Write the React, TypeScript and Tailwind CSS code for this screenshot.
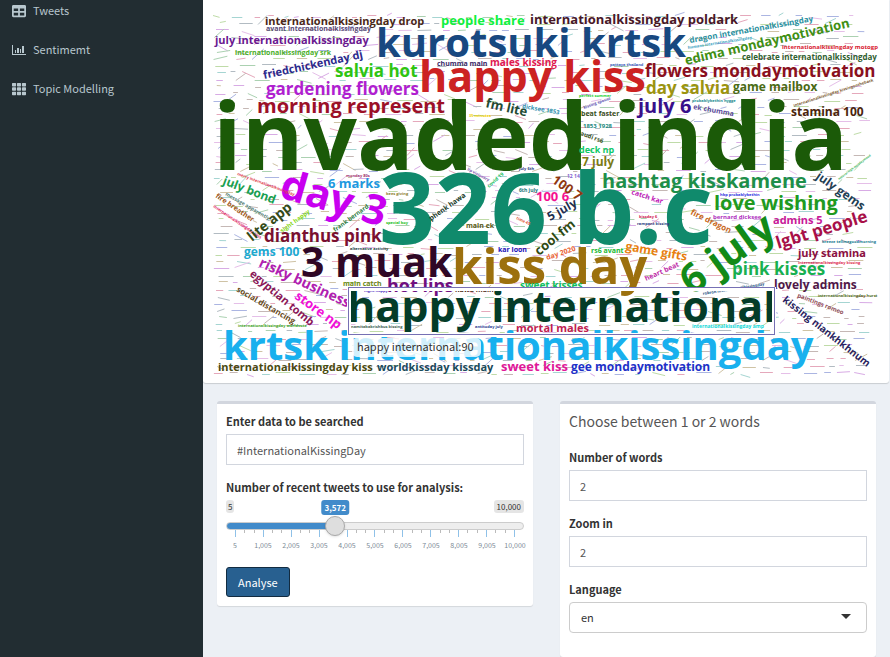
import { useState, type ReactNode } from "react";
import { FaTable, FaTh } from "react-icons/fa";

type Word = [text: string, x: number, y: number, size: number, color: string, angle?: number];

const words: Word[] = [
  ["invaded india", 213, 170, 94, "#1b5a08"],
  ["326 b.c", 379, 244, 98, "#108a6c"],
  ["kiss day", 452, 284, 49, "#9c700e"],
  ["3 muak", 301, 277, 41, "#300826"],
  ["happy kiss", 419, 92, 43, "#cc2222"],
  ["kurotsuki krtsk", 376, 57, 40, "#184880"],
  ["krtsk internationalkissingday", 223, 360, 40, "#18b0ee"],
  ["happy international", 347, 322, 43, "#043c28"],
  ["day 3", 278, 197, 41, "#c800f0", 16],
  ["6 july", 692, 296, 40, "#128a18", -36],
  ["internationalkissingday drop", 265, 25, 11, "#4a2818"],
  ["avant internationalkissingday", 266, 31, 7, "#5a4a78"],
  ["july internationalkissingday", 215, 44, 11, "#6a1890"],
  ["internationalkissingday srk", 235, 55, 7, "#4caf28"],
  ["friedchickenday dj", 264, 79, 11, "#2b2a8c", -12],
  ["salvia hot", 335, 77, 17, "#2fc412"],
  ["gardening flowers", 266, 95, 17, "#b01fd0"],
  ["morning represent", 257, 113, 20, "#9c1028"],
  ["people share", 441, 25, 13, "#10f040"],
  ["internationalkissingday poldark", 530, 24, 13, "#481828"],
  ["chumma main", 437, 66, 7, "#3a2a68"],
  ["males kissing", 490, 66, 10, "#e01850"],
  ["flowers mondaymotivation", 645, 77, 17, "#8a1020"],
  ["dragon internationalkissingday", 690, 43, 8, "#2a8fa0", -10],
  ["humans internationalkissingday", 688, 49, 4, "#3a9fc0", -9],
  ["edima mondaymotivation", 686, 65, 13, "#3f8f14", -13],
  ["internationalkissingday motogp", 782, 49, 6, "#d82030"],
  ["celebrate internationalkissingday", 742, 60, 8, "#2f6030"],
  ["day salvia", 646, 94, 17, "#9c9410"],
  ["game mailbox", 733, 91, 12, "#4a6a14"],
  ["july 6", 638, 113, 20, "#380f8a"],
  ["ek chumma", 693, 109, 7, "#5a4a9a", 10],
  ["stamina 100", 791, 116, 12, "#4a240c"],
  ["internationalkissingday kissingontheback", 794, 107, 4, "#7a5a30", -18],
  ["probablybethin hygge", 692, 102, 4, "#208a90"],
  ["fm lite", 485, 107, 13, "#244a34", 13],
  ["dicksee 1853", 522, 108, 6, "#2f90b0", 10],
  ["beat faster", 581, 116, 7, "#3a5020"],
  ["1853 1928", 583, 128, 6, "#1a8a80"],
  ["audi rs6", 580, 135, 6, "#3a5020", 20],
  ["kissing spouse", 584, 109, 4, "#5a50b0", -20],
  ["perfect summer", 579, 97, 4, "#20d030"],
  ["pattaya thailand", 610, 66, 4, "#3a60b8"],
  ["35 minutes", 469, 117, 4, "#f0d000"],
  ["deck np", 579, 153, 9, "#10c868"],
  ["7 july", 582, 166, 12, "#7a7a14"],
  ["hashtag kisskamene", 602, 188, 20, "#1e8f4a"],
  ["love wishing", 714, 210, 20, "#209a20"],
  ["100 6", 536, 201, 13, "#f51090"],
  ["100 7", 551, 182, 13, "#8f3810", 35],
  ["5 july", 550, 221, 12, "#1f2f50", -29],
  ["cool fm", 539, 256, 13, "#2f4a14", -39],
  ["main ek", 466, 228, 7, "#5a5a14"],
  ["phenk hawa", 431, 221, 7, "#203a28", -35],
  ["kar loon", 498, 252, 7, "#2010b8"],
  ["day 2020", 547, 260, 7, "#e86030", -18],
  ["rs6 avant", 591, 253, 7, "#18b830"],
  ["game gifts", 625, 250, 12, "#e88010", 10],
  ["6th july", 519, 192, 5, "#207878"],
  ["lip visionary", 467, 170, 4, "#8060b0", 28],
  ["covid 19", 489, 188, 5, "#18c060", -42],
  ["july 6th", 519, 170, 4, "#2a3a80"],
  ["time 45", 516, 219, 4, "#e05030", 25],
  ["12 14", 567, 178, 5, "#8060d0"],
  ["catch kar", 631, 194, 7, "#c020b8", 18],
  ["kissday 6", 639, 218, 4, "#d02050"],
  ["rampant kissing", 637, 225, 4, "#2a3a80"],
  ["fire dragon", 690, 214, 8, "#c86820", 26],
  ["bernard dicksee", 713, 219, 6, "#b030c0"],
  ["hbp probablybethin", 720, 196, 4, "#3030e0"],
  ["admins 5", 773, 224, 11, "#c81898"],
  ["lgbt people", 778, 249, 17, "#a81048", -17],
  ["july gems", 815, 178, 12, "#1f3f54", 35],
  ["breeze tellmegoodmorning", 822, 243, 4, "#207a90"],
  ["natural high mondaymood", 839, 180, 3, "#30b050", -37],
  ["july stamina", 798, 257, 11, "#8a1040"],
  ["internationalkissingday kissing", 798, 264, 4, "#e03050"],
  ["pink kisses", 732, 275, 17, "#18b050"],
  ["lovely admins", 774, 289, 12, "#501848"],
  ["kissing niankhkhnum", 782, 301, 10, "#2a1f60", 38],
  ["paintings romeo", 797, 297, 6, "#905058", 21],
  ["internationalkissingday hurst", 818, 297, 4, "#506a18"],
  ["robron internationalkissingday", 703, 295, 4, "#1a5080", -9],
  ["heart beat", 646, 281, 7, "#c030a8", -24],
  ["6 marks", 328, 188, 13, "#2098e0"],
  ["july bond", 222, 184, 12, "#18a050", 21],
  ["fire breather", 215, 197, 7, "#a05820", 34],
  ["message apparently", 225, 195, 5, "#507a70", 30],
  ["internationalkissingday pets", 213, 207, 4, "#e02060", 34],
  ["merry internationalkissingday", 237, 175, 4, "#e04050", 20],
  ["lite app", 252, 242, 14, "#344a1a", -39],
  ["sight happy", 282, 233, 6, "#88d820", -36],
  ["frank bernard", 335, 232, 6, "#2a7a40", -36],
  ["dianthus pink", 264, 242, 17, "#7a1030"],
  ["gems 100", 244, 256, 12, "#20a8d0"],
  ["alternative activity", 350, 250, 4, "#203a40"],
  ["special boy", 386, 224, 4, "#20c020"],
  ["bees giving", 386, 195, 4, "#8a8030"],
  ["monday 80s", 346, 177, 4, "#a03070"],
  ["risky business", 258, 266, 14, "#b020b0", 25],
  ["egyptian tomb", 249, 275, 11, "#8a1858", 40],
  ["store np", 294, 298, 13, "#f010d8", 36],
  ["social distancing", 236, 291, 8, "#6a4a1a", 30],
  ["main catch", 343, 286, 7, "#6a8a10"],
  ["hot lips", 387, 292, 18, "#700f80"],
  ["hawa main", 455, 292, 7, "#4a240c"],
  ["sweet kisses", 520, 289, 10, "#10c060"],
  ["night happy", 364, 292, 4, "#5030c0"],
  ["namitabakrishbus kissing", 351, 328, 4, "#406050"],
  ["antitoday july", 475, 328, 4, "#2a3a90"],
  ["mortal males", 516, 332, 11, "#c02050"],
  ["internationalkissingday amp", 692, 328, 5, "#10d8d8"],
  ["internationalkissingday worldvote", 238, 327, 4, "#40a020"],
  ["internationalkissingday kiss", 218, 371, 11, "#4a4a10"],
  ["worldkissday kissday", 377, 371, 11, "#1a4a5a"],
  ["sweet kiss", 501, 371, 13, "#e01898"],
  ["gee mondaymotivation", 571, 371, 12, "#2030c8"],
];

const inks = ["#c02858", "#2f8f3f", "#3048b8", "#8a6a20", "#a030c0", "#209890", "#705048", "#60a828", "#c060c8", "#405868"];

type Mark = { x: number; y: number; dx: number; dy: number; ink: string };

function buildMarks(): Mark[] {
  let seed = 17;
  const next = () => {
    seed = (seed * 16807) % 2147483647;
    return seed / 2147483647;
  };
  const marks: Mark[] = [];
  for (let row = 0; row < 52; row++) {
    let x = 213 + next() * 8;
    while (x < 860) {
      const length = 4 + next() * 12;
      const tilt = next() < 0.72 ? 0 : (next() - 0.6) * 1.4;
      marks.push({
        x,
        y: 16 + row * 7 + Math.floor(next() * 3) - 0.5,
        dx: length * Math.cos(tilt),
        dy: length * Math.sin(tilt),
        ink: inks[Math.floor(next() * inks.length)],
      });
      x += length + 4 + next() * 10;
    }
  }
  return marks;
}

const marks = buildMarks();

function WordCloud() {
  return (
    <svg viewBox="203 0 686 383" className="block w-full" role="img" aria-label="Word cloud of tweets">
      <g strokeWidth="1" opacity="0.4">
        {marks.map((m, i) => (
          <line key={i} x1={m.x} y1={m.y} x2={m.x + m.dx} y2={m.y + m.dy} stroke={m.ink} />
        ))}
      </g>
      <g className="font-['Open_Sans','Noto_Sans',sans-serif] font-bold">
        {words.map(([text, x, y, size, color, angle = 0]) => (
          <text key={text} transform={`translate(${x} ${y}) rotate(${angle})`} fontSize={size} fill={color}>
            {text}
          </text>
        ))}
      </g>
      <rect x="349" y="289" width="425" height="46" fill="none" stroke="#ffffff" strokeWidth="4" />
      <rect x="348.5" y="287.5" width="426" height="47" fill="none" stroke="#7670b4" />
      <rect x="352" y="338" width="129" height="19" rx="5" fill="#ffffff" fillOpacity="0.8" />
      <text x="357" y="351" fontSize="11" fill="#333333" className="font-['Noto_Sans_CJK_SC',sans-serif]">
        happy international:90
      </text>
    </svg>
  );
}

function ChartIcon() {
  return (
    <svg viewBox="0 0 14 12" className="h-[12px] w-[14px]" fill="currentColor" aria-hidden="true">
      <path d="M0 1h1v9h13v1H0zM3 6h1v3H3zM5 4h2v5H5zM8 5h1v4H8zM10 2h2v7h-2z" />
    </svg>
  );
}

function NavItem({ icon, label }: { icon: ReactNode; label: string }) {
  return (
    <a href="#" className="flex h-[39px] items-center gap-[7px] pl-3">
      {icon}
      <span>{label}</span>
    </a>
  );
}

function Field({ id, label, defaultValue }: { id: string; label: string; defaultValue: string }) {
  return (
    <div className="mb-3">
      <label htmlFor={id} className="mb-[3px] block font-bold leading-5">
        {label}
      </label>
      <input
        id={id}
        defaultValue={defaultValue}
        className="block h-[31px] w-full border border-[#d2d6de] bg-white px-[10px] text-[11px] text-[#555]"
      />
    </div>
  );
}

const gridLabels = ["5", "1,005", "2,005", "3,005", "4,005", "5,005", "6,005", "7,005", "8,005", "9,005", "10,000"];
const ticks = Array.from({ length: 31 }, (_, i) => i);

function TweetSlider() {
  const [count, setCount] = useState(3572);
  const ratio = (count - 5) / 9995;
  const thumb = `calc(10px + (100% - 20px) * ${ratio})`;
  return (
    <div>
      <label htmlFor="tweets" className="block font-bold leading-5">
        Number of recent tweets to use for analysis:
      </label>
      <div className="relative mt-[3px] flex justify-between text-[8px] leading-[13px] text-[#333]">
        <span className="rounded-[3px] bg-black/10 px-[2px]">5</span>
        <span className="rounded-[3px] bg-black/10 px-[3px]">10,000</span>
        <output
          htmlFor="tweets"
          className="absolute top-0 -translate-x-1/2 rounded-[3px] bg-[#428bca] px-[3px] font-bold leading-[15px] text-white"
          style={{ left: thumb }}
        >
          {count.toLocaleString("en-US")}
        </output>
      </div>
      <input
        id="tweets"
        type="range"
        min={5}
        max={10000}
        value={count}
        onChange={(e) => setCount(Number(e.target.value))}
        className="relative z-10 mt-[9px] block h-2 w-full appearance-none rounded-full border border-[#ccc] [&::-webkit-slider-thumb]:h-5 [&::-webkit-slider-thumb]:w-5 [&::-webkit-slider-thumb]:appearance-none [&::-webkit-slider-thumb]:rounded-full [&::-webkit-slider-thumb]:border [&::-webkit-slider-thumb]:border-[#aaa] [&::-webkit-slider-thumb]:bg-[#dedede] [&::-webkit-slider-thumb]:shadow"
        style={{ background: `linear-gradient(to right, #428bca ${ratio * 100}%, #eeeeee ${ratio * 100}%) border-box` }}
      />
      <div className="mx-[9px] flex h-[7px] justify-between">
        {ticks.map((i) => (
          <span key={i} className={i % 3 === 0 ? "h-[7px] w-px bg-[#8fc1e8]" : "h-[3px] w-px bg-[#bbb]"} />
        ))}
      </div>
      <div className="-mx-[5px] mt-[2px] grid grid-cols-11 text-center text-[7px] leading-[13px] text-[#7d8a96]">
        {gridLabels.map((text) => (
          <span key={text}>{text}</span>
        ))}
      </div>
    </div>
  );
}

const panel = "rounded-[3px] border-t-[3px] border-[#d2d6de] bg-white px-[9px] shadow-[0_1px_1px_rgba(0,0,0,0.1)]";

export default function App() {
  return (
    <div className="flex h-screen overflow-hidden bg-[#ecf0f5] font-['Noto_Sans_CJK_SC',sans-serif] text-[11px] text-[#333]">
      <aside className="w-[203px] shrink-0 bg-[#222d32] text-[#b8c7ce]">
        <nav className="-mt-[9px]">
          <NavItem icon={<FaTable size={14} />} label="Tweets" />
          <NavItem icon={<ChartIcon />} label="Sentimemt" />
          <NavItem icon={<FaTh size={14} />} label="Topic Modelling" />
        </nav>
      </aside>
      <main className="flex min-w-0 flex-1 flex-col">
        <section className="mr-px rounded-b-[3px] bg-white shadow-[0_1px_1px_rgba(0,0,0,0.15)]">
          <WordCloud />
        </section>
        <div className="flex flex-1 items-start gap-[27px] px-[14px] pt-[18px]">
          <section className={`${panel} flex-1 pb-[9px] pt-[7px]`}>
            <Field id="query" label="Enter data to be searched" defaultValue="#InternationalKissingDay" />
            <TweetSlider />
            <button className="mt-[15px] h-[30px] rounded-[3px] border border-[#122b40] bg-[#286090] px-[11px] text-white">
              Analyse
            </button>
          </section>
          <section className={`${panel} flex-1 self-stretch pt-[7px]`}>
            <h2 className="mb-4 text-[14px] leading-5 text-[#555]">Choose between 1 or 2 words</h2>
            <Field id="words" label="Number of words" defaultValue="2" />
            <Field id="zoom" label="Zoom in" defaultValue="2" />
            <label htmlFor="language" className="mb-[3px] block font-bold leading-5">
              Language
            </label>
            <div className="relative">
              <select
                id="language"
                className="block h-[31px] w-full appearance-none rounded border border-[#ccc] bg-white px-[11px] text-[11px] text-[#333]"
              >
                <option>en</option>
              </select>
              <span className="pointer-events-none absolute right-4 top-3 border-x-[5px] border-t-[5px] border-x-transparent border-t-[#333]" />
            </div>
          </section>
        </div>
      </main>
    </div>
  );
}
